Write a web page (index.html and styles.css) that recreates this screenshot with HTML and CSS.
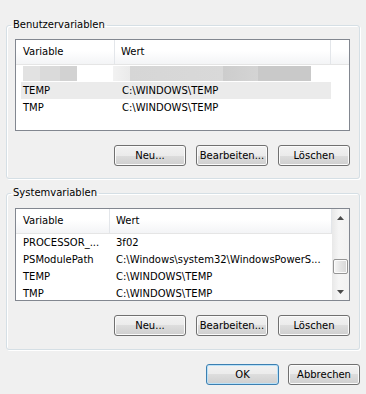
FILE: index.html
```html
<!DOCTYPE html>
<html lang="de">
<head>
    <meta charset="UTF-8">
    <meta name="viewport" content="width=device-width, initial-scale=1.0">
    <title>Umgebungsvariablen</title>
    <link rel="stylesheet" href="styles.css">
</head>
<body>
    <div class="dialog">
        <fieldset class="group group-user">
            <legend>Benutzervariablen</legend>
            <div class="listview lv-user">
                <div class="lv-main">
                    <div class="lv-header">
                        <div class="col col-name">Variable</div>
                        <div class="col col-value">Wert</div>
                        <div class="col col-fill"></div>
                    </div>
                    <div class="lv-row">
                        <span class="cell cell-name"><span class="blur blur-name"></span></span>
                        <span class="cell cell-value"><span class="blur blur-value"></span></span>
                    </div>
                    <div class="lv-row selected">
                        <span class="cell cell-name">TEMP</span>
                        <span class="cell cell-value">C:\WINDOWS\TEMP</span>
                    </div>
                    <div class="lv-row">
                        <span class="cell cell-name">TMP</span>
                        <span class="cell cell-value">C:\WINDOWS\TEMP</span>
                    </div>
                </div>
            </div>
            <div class="button-row">
                <button class="btn">Neu...</button>
                <button class="btn">Bearbeiten...</button>
                <button class="btn">Löschen</button>
            </div>
        </fieldset>

        <fieldset class="group group-system">
            <legend>Systemvariablen</legend>
            <div class="listview lv-system">
                <div class="lv-main">
                    <div class="lv-header">
                        <div class="col col-name">Variable</div>
                        <div class="col col-value">Wert</div>
                    </div>
                    <div class="lv-row">
                        <span class="cell cell-name">PROCESSOR_...</span>
                        <span class="cell cell-value">3f02</span>
                    </div>
                    <div class="lv-row">
                        <span class="cell cell-name">PSModulePath</span>
                        <span class="cell cell-value">C:\Windows\system32\WindowsPowerS...</span>
                    </div>
                    <div class="lv-row">
                        <span class="cell cell-name">TEMP</span>
                        <span class="cell cell-value">C:\WINDOWS\TEMP</span>
                    </div>
                    <div class="lv-row">
                        <span class="cell cell-name">TMP</span>
                        <span class="cell cell-value">C:\WINDOWS\TEMP</span>
                    </div>
                </div>
                <div class="scrollbar">
                    <div class="sb-btn">
                        <svg width="7" height="4" viewBox="0 0 7 4"><path d="M0 4 L3.5 0 L7 4 Z" fill="#4a4a4a"/></svg>
                    </div>
                    <div class="sb-track">
                        <div class="sb-thumb"></div>
                    </div>
                    <div class="sb-btn">
                        <svg width="7" height="4" viewBox="0 0 7 4"><path d="M0 0 L3.5 4 L7 0 Z" fill="#4a4a4a"/></svg>
                    </div>
                </div>
            </div>
            <div class="button-row">
                <button class="btn">Neu...</button>
                <button class="btn">Bearbeiten...</button>
                <button class="btn">Löschen</button>
            </div>
        </fieldset>

        <div class="dialog-buttons">
            <button class="btn btn-default">OK</button>
            <button class="btn">Abbrechen</button>
        </div>
    </div>
</body>
</html>
```

FILE: styles.css
```css
body {
    margin: 0;
    background: #f0f0f0;
    font-family: "DejaVu Sans", Tahoma, sans-serif;
    font-size: 10px;
    color: #000;
}

.dialog {
    width: 366px;
    height: 394px;
    padding-top: 18px;
    box-sizing: border-box;
    display: flex;
    flex-direction: column;
}

.group {
    margin: 0 6px 0 6px;
    padding: 7px 9px 12px 8px;
    border: 1px solid #d5dfe5;
    border-radius: 3px;
    box-shadow: inset 1px 1px 0 #fff, 1px 1px 0 #fff;
    min-width: 0;
}

.group legend {
    margin-left: -4px;
    padding: 0 2px;
    line-height: 14px;
}

.group-system {
    margin-top: 7px;
    padding-top: 8px;
    padding-bottom: 13px;
}

.listview {
    display: flex;
    height: 92px;
    border: 1px solid #828790;
    background: #fff;
    box-sizing: border-box;
    overflow: hidden;
}

.lv-system {
    height: 93px;
}

.lv-main {
    flex: 1;
    min-width: 0;
}

.lv-header {
    display: flex;
    height: 24px;
    border-bottom: 1px solid #e5e5e5;
    background: linear-gradient(#ffffff 45%, #f3f4f6);
}

.col {
    height: 24px;
    line-height: 24px;
    padding-left: 6px;
    border-right: 1px solid #e3e6ea;
    box-sizing: border-box;
    white-space: nowrap;
}

.col-name {
    width: 99px;
    padding-left: 7px;
}

.col-value {
    width: 216px;
}

.col-fill {
    flex: 1;
    border-right: none;
}

.lv-system .col-name {
    width: 94px;
}

.lv-system .col-value {
    flex: 1;
    width: auto;
}

.lv-row {
    display: flex;
    width: 310px;
    height: 17px;
    line-height: 17px;
    margin-left: 5px;
    white-space: nowrap;
}

.lv-row.selected {
    background: #ebebeb;
}

.cell-name {
    width: 95px;
    padding-left: 2px;
    box-sizing: border-box;
}

.cell-value {
    padding-left: 6px;
}

.lv-system .cell-name {
    width: 89px;
}

.blur {
    display: block;
    height: 15px;
    margin-top: 1px;
}

.blur-name {
    width: 54px;
    background: linear-gradient(to right, #e2e2e2 0, #e2e2e2 17px, #dadada 17px, #dadada 37px, #d2d2d2 37px);
}

.blur-value {
    width: 198px;
    margin-left: -9px;
    background: linear-gradient(to right, #f2f2f2 0, #eaeaea 17px, #d6d6d6 17px, #d9d9d9 110px, #cdcdcd 110px, #d4d4d4 145px, #c9c9c9 145px);
}

.scrollbar {
    width: 17px;
    display: flex;
    flex-direction: column;
    background: linear-gradient(to right, #e8e8e8, #f5f5f5 40%, #f2f2f2);
}

.sb-btn {
    height: 17px;
    display: flex;
    align-items: center;
    justify-content: center;
}

.sb-track {
    flex: 1;
    padding-top: 33px;
}

.sb-thumb {
    height: 15px;
    margin: 0 1px;
    border: 1px solid #959595;
    border-radius: 2px;
    box-sizing: border-box;
    background: linear-gradient(to right, #f6f6f6, #e4e4e4 50%, #d8d8d8);
    box-shadow: inset 0 0 0 1px #fbfbfb;
}

.button-row {
    display: flex;
    justify-content: flex-end;
    gap: 10px;
    margin-top: 14px;
}

.btn {
    width: 72px;
    height: 21px;
    padding: 0;
    border: 1px solid #707070;
    border-radius: 3px;
    background: linear-gradient(#f2f2f2 0, #ebebeb 50%, #dddddd 50%, #cfcfcf 100%);
    box-shadow: inset 0 0 0 1px #fbfbfb;
    font: inherit;
    color: #000;
}

.dialog-buttons {
    display: flex;
    justify-content: flex-end;
    gap: 9px;
    margin: 14px 6px 0 0;
}

.btn-default {
    width: 73px;
    border-color: #3c7fb1;
    box-shadow: inset 0 0 0 1px #b9e1f8;
}
```
